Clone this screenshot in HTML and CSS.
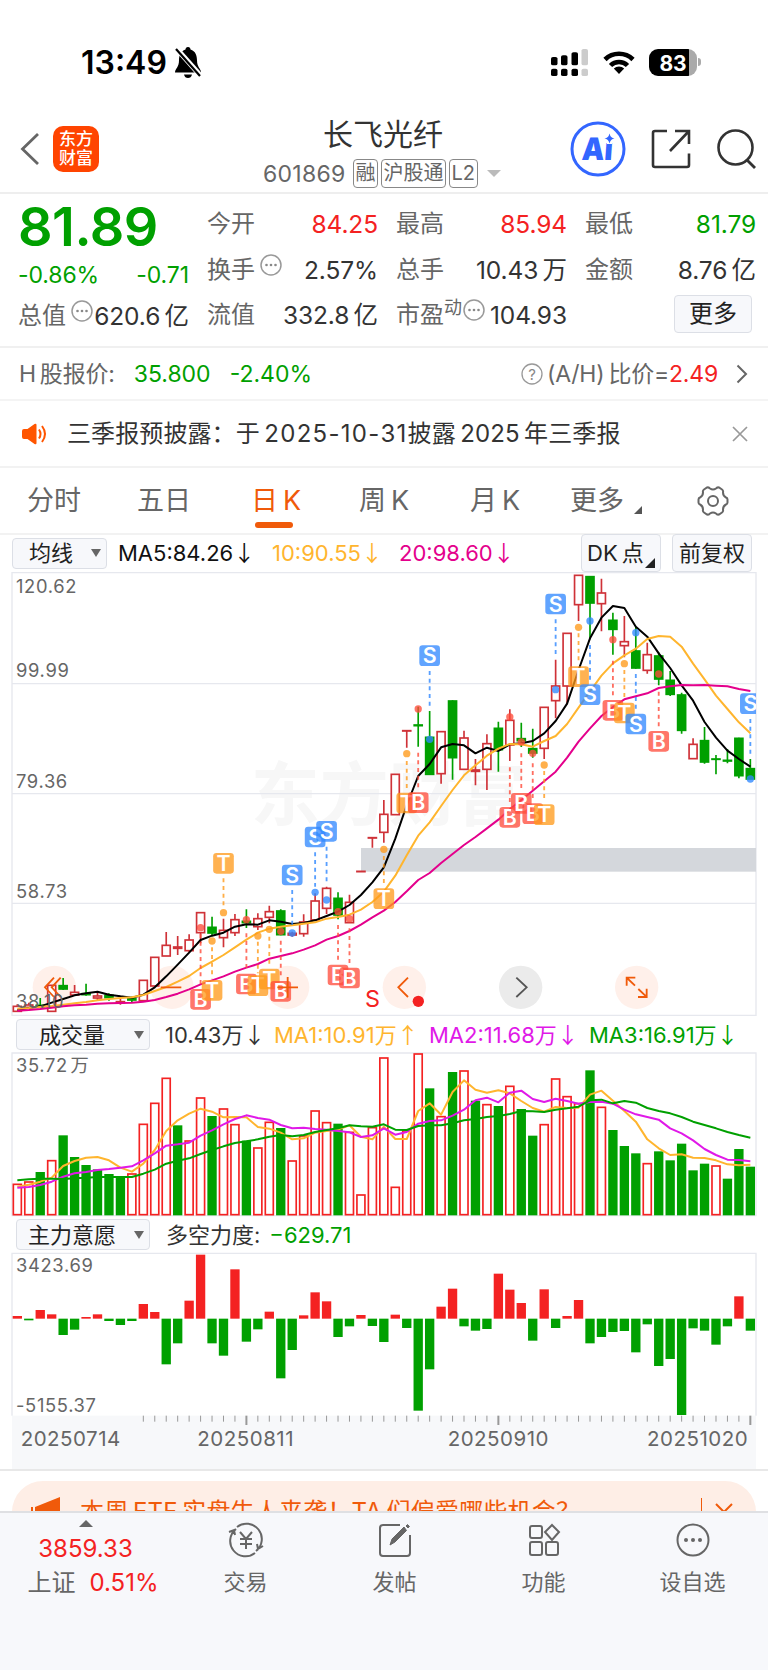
FILE: index.html
```html
<!DOCTYPE html>
<html lang="zh-CN">
<head>
    <meta charset="UTF-8">
    <meta name="viewport" content="width=device-width, initial-scale=1.0">
    <title>长飞光纤</title>
    <link rel="stylesheet" href="styles.css">
</head>
<body>
    <div class="status">
        <span class="time">13:49</span>
        <svg class="bell" width="26" height="40" viewBox="0 0 26 40"><path d="M13 1c2 0 2.500 1.500 2.500 2.500 5 1.500 6.500 6 6.500 11 0 7 4 8 4 12H0c0-4 4-5 4-12 0-5 1.500-9.500 6.500-11C10.500 2.500 11 1 13 1zM9 28.500h8c-.5 2.500-2 3.500-4 3.500s-3.500-1-4-3.500z" transform="translate(0 3)"/><path d="M1 5l24 27" stroke="#fff" stroke-width="5"/><path d="M1 6l24 27" stroke="#000" stroke-width="2.200"/></svg>
        <svg class="signal" width="38" height="27" viewBox="0 5 38 34" preserveAspectRatio="none"><g fill="#000"><rect x="0" y="15" width="6.500" height="10.500" rx="2"/><rect x="10" y="13" width="6.500" height="12.500" rx="2"/><rect x="20.500" y="9" width="6.500" height="16.500" rx="2"/><rect x="0" y="30" width="6.500" height="9" rx="2"/><rect x="10" y="30" width="6.500" height="9" rx="2"/><rect x="20.500" y="30" width="6.500" height="9" rx="2"/></g><g fill="#ccc"><rect x="30.500" y="5" width="6.500" height="20.500" rx="2"/><rect x="30.500" y="30" width="6.500" height="9" rx="2"/></g></svg>
        <svg class="wifi" width="32" height="26" viewBox="0 0 32 26"><path d="M2 9.500a20 20 0 0 1 28 0M7.500 15.500a12 12 0 0 1 17 0" fill="none" stroke="#000" stroke-width="4.600"/><path d="M16 24l-5.200-5.500a7.500 7.500 0 0 1 10.400 0z"/></svg>
        <span class="battery"><b>83</b></span>
    </div>

    <div class="nav">
        <svg class="back" width="20" height="34" viewBox="0 0 20 34"><path d="M18 2L2.500 17 18 32" fill="none" stroke="#666" stroke-width="2.800"/></svg>
        <div class="logo">东方<br>财富</div>
        <div class="title">
            <h1>长飞光纤</h1>
            <div class="code"><span>601869</span><i>融</i><i>沪股通</i><i>L2</i><em></em></div>
        </div>
        <svg class="ai" width="56" height="56" viewBox="0 0 56 56"><circle cx="28" cy="28" r="26" fill="none" stroke="#3366ff" stroke-width="3"/><text x="14" y="39" textLength="31" lengthAdjust="spacingAndGlyphs" transform="skewX(-4)">Ai</text><path d="M39.500 12.500q1 4.500 5 5-4 .5-5 5-1-4.500-5-5 4-.5 5-5z" fill="#3366ff" stroke="#fff" stroke-width="5" paint-order="stroke"/></svg>
        <svg class="share" width="42" height="42" viewBox="0 0 42 42"><path d="M17 3H5a2 2 0 0 0-2 2v32a2 2 0 0 0 2 2h32a2 2 0 0 0 2-2V25.500M25 3h14v13M39 3L20 23" fill="none" stroke="#333" stroke-width="2.600"/></svg>
        <svg class="search" width="42" height="42" viewBox="0 0 42 42"><circle cx="19.500" cy="19.500" r="17" fill="none" stroke="#333" stroke-width="2.600"/><path d="M31 32l8 8" stroke="#333" stroke-width="2.800"/></svg>
    </div>

    <div class="quote">
        <div class="col first">
            <strong>81.89</strong>
            <p class="green change"><span>-0.86%</span><span>-0.71</span></p>
            <p><label>总值</label><svg class="dots" viewBox="0 0 22 22"><use href="#dots"/></svg><span>620.6&thinsp;亿</span></p>
        </div>
        <div class="col">
            <p><label>今开</label><span class="red">84.25</span></p>
            <p><label>换手</label><svg class="dots" viewBox="0 0 22 22"><use href="#dots"/></svg><span>2.57%</span></p>
            <p><label>流值</label><span>332.8&thinsp;亿</span></p>
        </div>
        <div class="col">
            <p><label>最高</label><span class="red">85.94</span></p>
            <p><label>总手</label><span>10.43&thinsp;万</span></p>
            <p><label>市盈<sup>动</sup></label><svg class="dots tight" viewBox="0 0 22 22"><use href="#dots"/></svg><span>104.93</span></p>
        </div>
        <div class="col">
            <p><label>最低</label><span class="green">81.79</span></p>
            <p><label>金额</label><span>8.76&thinsp;亿</span></p>
            <p><button class="more">更多</button></p>
        </div>
    </div>

    <div class="hshare">
        <label>H&thinsp;股报价:</label>
        <span class="green">35.800</span>
        <span class="green">-2.40%</span>
        <svg class="help" width="22" height="22" viewBox="0 0 22 22"><circle cx="11" cy="11" r="10" fill="none" stroke="#999" stroke-width="1.300"/><text x="11" y="16.500">?</text></svg>
        <label>(A/H)&thinsp;比价=</label><span class="red">2.49</span>
        <svg class="next" width="12" height="20" viewBox="0 0 12 20"><path d="M1.500 1.500L10 10l-8.500 8.500" fill="none" stroke="#666" stroke-width="2"/></svg>
    </div>

    <div class="notice">
        <svg width="26" height="22" viewBox="0 0 26 22"><path d="M0 8q0-2 2-2h3.500l7-5q2-1 2 1v18q0 2-2 1l-7-5H2q-2 0-2-2z" fill="#ff5500"/><path d="M17 6.500q3 4.500 0 9M20 3q6 8 0 16" fill="none" stroke="#ff5500" stroke-width="2"/></svg>
        <span>三季报预披露：于&thinsp;<time>2025-10-31</time>披露&thinsp;2025&thinsp;年三季报</span>
        <svg width="16" height="16" viewBox="0 0 16 16"><path d="M1 1l14 14M15 1L1 15" stroke="#999" stroke-width="1.700"/></svg>
    </div>

    <div class="tabs">
        <span>分时</span>
        <span>五日</span>
        <span class="active">日&thinsp;K</span>
        <span>周&thinsp;K</span>
        <span>月&thinsp;K</span>
        <span class="corner">更多</span>
        <svg width="32" height="30" viewBox="0 0 32 30"><g fill="none" stroke="#666" stroke-width="2"><path d="M10 1.500Q12 1 13 2.500q3 2 6 0 1-1.500 3-1l3 2q1.500 1 1 3 0 3.500 3 5 1.500.5 1.500 2v3q0 1.500-1.500 2-3 1.500-3 5 .5 2-1 3l-3 2q-2 .5-3-1-3-2-6 0-1 1.500-3 1l-3-2q-1.500-1-1-3 0-3.500-3-5Q1.500 18 1.500 16.500v-3q0-1.500 1.500-2 3-1.500 3-5-.5-2 1-3z"/><circle cx="16" cy="15" r="5"/></g></svg>
    </div>

    <div class="toolbar ma">
        <button class="select">均线</button>
        <span>MA5:84.26<u>↓</u></span>
        <span class="yellow">10:90.55<u>↓</u></span>
        <span class="pink">20:98.60<u>↓</u></span>
        <button class="small corner">DK&thinsp;点</button>
        <button class="small">前复权</button>
    </div>

    <!-- all three charts use three units per pixel -->
    <svg class="chart" width="768" height="448" viewBox="0 0 2304 1344">
        <clipPath id="plot"><rect x="36" y="8" width="2232" height="1328"/></clipPath>
        <text class="watermark" x="752" y="750">东方财富</text>
        <path class="grid" d="M36 341H2268M36 671H2268M36 1000H2268"/>
        <path class="frame" d="M36 8H2268V1336H36z"/>
        <rect x="1083" y="834" width="1185" height="71" fill="#d4d7dc"/>
        <g fill="#fff0ea">
            <circle cx="163" cy="1252" r="65"/>
            <circle cx="516" cy="1252" r="65"/>
            <circle cx="863" cy="1252" r="65"/>
            <circle cx="1213" cy="1252" r="65"/>
            <circle cx="1562" cy="1252" r="65" fill="#ebebeb"/>
            <circle cx="1910" cy="1252" r="65"/>
        </g>
        <g id="kline" clip-path="url(#plot)"></g>
        <g class="tool">
            <path d="M162 1223l-27 29 27 29M182 1223l-27 29 27 29M482 1252h62M832 1252h62M863 1221v62M1224 1223l-29 29 29 29"/>
            <path d="M1549 1223l31 29-31 29" stroke="#555"/>
            <path d="M1880 1247v-24h26M1881 1224l24 23M1940 1256v25h-26M1939 1280l-24-23"/>
        </g>
        <text class="sell" x="1095" y="1310">S</text>
        <circle cx="1255" cy="1294" r="17" fill="#f42222"/>
        <g class="axis">
            <text x="48" y="69">120.62</text>
            <text x="48" y="321">99.99</text>
            <text x="48" y="653">79.36</text>
            <text x="48" y="983">58.73</text>
            <text x="48" y="1315">38.10</text>
        </g>
    </svg>

    <div class="toolbar vol">
        <button class="select">成交量</button>
        <span>10.43万<u>↓</u></span>
        <span class="yellow">MA1:10.91万<u>↑</u></span>
        <span class="purple">MA2:11.68万<u>↓</u></span>
        <span class="green">MA3:16.91万<u>↓</u></span>
    </div>
    <svg class="chart" width="768" height="165" viewBox="0 126 2304 495">
        <path class="frame" d="M36 129H2268V617H36z"/>
        <g id="volume"></g>
        <g class="axis"><text x="48" y="186">35.72<tspan dx="8">万</tspan></text></g>
    </svg>

    <div class="toolbar force">
        <button class="select">主力意愿</button>
        <span>多空力度:</span>
        <span class="green">−629.71</span>
    </div>
    <svg class="chart" width="768" height="217" viewBox="0 111 2304 651">
        <rect x="36" y="602" width="2232" height="160" fill="#f7f8fa"/>
        <path class="frame" d="M36 602V115H2268V602"/>
        <g id="force"></g>
        <g class="axis">
            <text x="48" y="172">3423.69</text>
            <text x="48" y="591">-5155.37</text>
        </g>
        <g class="axis dates">
            <text x="62" y="693">20250714</text>
            <text x="592" y="693">20250811</text>
            <text x="1343" y="693">20250910</text>
            <text x="1941" y="693">20251020</text>
        </g>
    </svg>

    <div class="promo">
        <div class="pill">
            <svg width="30" height="30" viewBox="0 0 30 30"><path d="M1 10h2v14H1zM5 10l25-10v30L5 24z" fill="#f05a0a"/></svg>
            <span>本周&thinsp;ETF&thinsp;实盘牛人来袭！TA&thinsp;们偏爱哪些机会？</span>
            <i></i>
            <svg width="18" height="18" viewBox="0 0 18 18"><path d="M1 1l16 16M17 1L1 17" stroke="#f05a0a" stroke-width="2"/></svg>
        </div>
    </div>

    <div class="bottom">
        <div class="index">
            <em></em>
            <span class="red">3859.33</span>
            <span class="name">上证<b class="red">0.51%</b></span>
        </div>
        <div class="item">
            <svg width="40" height="36" viewBox="0 0 40 36"><path d="M11 5A15 15 0 0 1 30 29M29 31A15 15 0 0 1 10 7M3 10l5-2 1 5M37 24l-5 3-1-5M14 10l6 7 6-7M20 17v10M14 17h12M14 22h12"/></svg>
            <span>交易</span>
        </div>
        <div class="item">
            <svg width="40" height="36" viewBox="0 0 40 36"><path d="M25 3H8a3 3 0 0 0-3 3v25a3 3 0 0 0 3 3h24a3 3 0 0 0 3-3V13"/><path d="M15 23l2-6L29 5l2.500 3.500L20 20zM31 4l1.500-1.500 2 2L33 6z" fill="#666" stroke-width="1"/></svg>
            <span>发帖</span>
        </div>
        <div class="item">
            <svg width="40" height="36" viewBox="0 0 40 36"><rect x="6" y="4" width="12" height="12" rx="2"/><path d="M28 3l7 7-7 8-7-8z"/><rect x="6" y="20" width="12" height="13" rx="2"/><rect x="22" y="20" width="12" height="13" rx="2"/></svg>
            <span>功能</span>
        </div>
        <div class="item">
            <svg width="40" height="36" viewBox="0 0 40 36"><circle cx="20" cy="18" r="15.500"/><g fill="#666" stroke="none"><circle cx="13" cy="18" r="2"/><circle cx="20" cy="18" r="2"/><circle cx="27" cy="18" r="2"/></g></svg>
            <span>设自选</span>
        </div>
    </div>

    <svg width="0" height="0" class="defs">
        <symbol id="dots" viewBox="0 0 22 22"><circle cx="11" cy="11" r="10" fill="none" stroke="#999" stroke-width="1.500"/><g fill="#888"><circle cx="6.500" cy="11" r="1.300"/><circle cx="11" cy="11" r="1.300"/><circle cx="15.500" cy="11" r="1.300"/></g></symbol>
    </svg>
    <script src="script.js"></script>
</body>
</html>
```

FILE: styles.css
```css
body {
    margin: 0;
    width: 768px;
    height: 1670px;
    overflow: hidden;
    background: #fff;
    color: #333;
    font-family: Inter, "Noto Sans CJK SC", sans-serif;
    font-size: 24px;
    line-height: 32px;
}
svg {
    display: block;
    flex: none;
}
p, h1 {
    margin: 0;
    font-weight: 400;
}
i, em {
    font-style: normal;
}
button {
    font: inherit;
    color: #222;
    background: #f7f8fb;
    border: 1px solid #dcdfe6;
    border-radius: 4px;
    padding: 0;
}
.red { color: #f42222; }
.green { color: #00a000; }
.yellow { color: #ffb52e; }
.pink { color: #e4008c; }
.purple { color: #e019e8; }
.defs {
    position: absolute;
}

/* status bar */
.status {
    display: flex;
    align-items: center;
    height: 100px;
    padding: 25px 71px 0 81px;
    box-sizing: border-box;
    color: #000;
}
.time {
    font-size: 32px;
    font-weight: 600;
    width: 94px;
}
.signal {
    margin-left: auto;
}
.wifi {
    margin: 0 14px 0 14px;
}
.battery {
    width: 48px;
    height: 27px;
    border-radius: 9px;
    background: linear-gradient(90deg, #000 84%, #aaa 84%);
    line-height: 27px;
    text-align: center;
    position: relative;
}
.battery::after {
    content: "";
    position: absolute;
    right: -4px;
    top: 9px;
    width: 3px;
    height: 8px;
    border-radius: 0 4px 4px 0;
    background: #aaa;
}
.battery b {
    color: #fff;
    font-size: 21px;
    font-weight: 700;
}

/* title row */
.nav {
    display: flex;
    align-items: center;
    height: 92px;
    padding: 7px 10px 0 20px;
    box-sizing: border-box;
    border-bottom: 1px solid #fff;
}
.logo {
    width: 46px;
    height: 46px;
    margin-left: 13px;
    border-radius: 10px;
    background: #ff4400;
    color: #fff;
    font-size: 17px;
    line-height: 19px;
    font-weight: 500;
    text-align: center;
    padding-top: 4px;
    box-sizing: border-box;
}
.title {
    margin-left: 164px;
    width: 307px;
}
.title h1 {
    width: 240px;
    text-align: center;
    font-size: 30px;
    line-height: 40px;
    margin-top: 9px;
}
.code {
    display: flex;
    align-items: center;
    height: 40px;
    color: #666;
    font-size: 23px;
    letter-spacing: 0.3px;
}
.code span {
    width: 90px;
}
.code i {
    border: 1px solid #888;
    border-radius: 4px;
    font-size: 20px;
    line-height: 27px;
    letter-spacing: 0;
    padding: 0 1.500px;
    margin-right: 3px;
}
.code em {
    border: 7px solid transparent;
    border-top-color: #bbb;
    margin: 6px 0 0 6px;
}
.ai text {
    font: 900 31px Inter, sans-serif;
    fill: #3366ff;
}
.share {
    margin-left: 24px;
}
.search {
    margin-left: 24px;
    margin-right: -20px;
}

/* quote table */
.quote {
    display: grid;
    grid-template-columns: repeat(4, 171px);
    gap: 18px;
    height: 156px;
    padding: 7px 0 0 18px;
    box-sizing: border-box;
    border-top: 2px solid #eee;
    border-bottom: 2px solid #f0f0f0;
}
.col p {
    display: flex;
    align-items: center;
    height: 45.700px;
    white-space: nowrap;
}
.col span {
    margin-left: auto;
    font-size: 24.500px;
    letter-spacing: -0.1px;
}
.col label, .hshare label {
    color: #666;
}
.first strong {
    display: block;
    height: 55px;
    font-size: 54px;
    line-height: 52px;
    font-weight: 600;
    color: #00a000;
    letter-spacing: -0.5px;
}
.col .change {
    height: 37px;
    padding-top: 1px;
    box-sizing: border-box;
}
.change span:first-child {
    margin: 0;
}
.col.first .change span {
    font-size: 23px;
}
.col sup {
    font-size: 18px;
    line-height: 10px;
    vertical-align: 9px;
}
.dots {
    width: 22px;
    height: 22px;
    margin: -10px -4px 0 5px;
}
.tight {
    margin-left: 1px;
}
.more {
    width: 78px;
    height: 38px;
    margin: -3px 4px 0 auto;
}

.hshare {
    display: flex;
    align-items: center;
    height: 53px;
    padding: 0 20px 0 19px;
    box-sizing: border-box;
    border-bottom: 2px solid #f4f4f4;
    font-size: 23px;
    letter-spacing: -0.2px;
    white-space: nowrap;
}
.hshare span.green {
    margin-left: 19px;
    letter-spacing: 0;
}
.help {
    margin: 0 4px 0 auto;
}
.help text {
    font-size: 15px;
    fill: #888;
    text-anchor: middle;
}
.next {
    margin-left: 18px;
}

.notice {
    display: flex;
    align-items: center;
    height: 67px;
    padding: 0 20px 0 22px;
    box-sizing: border-box;
    border-bottom: 2px solid #f2f2f2;
    white-space: nowrap;
}
.notice span {
    flex: 1;
    margin-left: 19px;
    letter-spacing: 0.1px;
}
.notice time {
    letter-spacing: 1.300px;
}

/* period tabs */
.tabs {
    display: grid;
    grid-template-columns: 110px 114px 108px 111px 100px 127px 32px;
    align-items: center;
    height: 67px;
    padding: 1px 0 0 27px;
    box-sizing: border-box;
    border-bottom: 2px solid #f2f2f2;
    color: #666;
    font-size: 27px;
}
.tabs .active {
    color: #f05a0a;
    position: relative;
}
.tabs .active::after {
    content: "";
    position: absolute;
    left: 4px;
    bottom: -11px;
    width: 38px;
    height: 6px;
    border-radius: 3px;
    background: #f05a0a;
}
.corner::after {
    content: "";
    display: inline-block;
    border: 4px solid #555;
    border-top-color: transparent;
    border-left-color: transparent;
    margin-left: 10px;
    vertical-align: -4px;
}

/* chart headers */
.toolbar {
    display: flex;
    align-items: center;
    font-size: 22px;
    white-space: nowrap;
}
.toolbar u {
    text-decoration: none;
    font-family: "Noto Sans CJK SC";
    line-height: 20px;
}
.select {
    display: flex;
    align-items: center;
    justify-content: space-between;
    width: 95px;
    height: 31px;
    padding: 0 5px 0 16px;
    box-sizing: border-box;
}
.select::after {
    content: "";
    border: 5px solid transparent;
    border-top: 8px solid #666;
    border-bottom: 0;
}
.ma {
    padding: 1px 0 0 12px;
    height: 35px;
    box-sizing: border-box;
}
.ma span {
    width: 154px;
}
.ma .select + span {
    margin-left: 11px;
    color: #111;
}
.ma .yellow {
    width: 127px;
}
.ma .pink {
    width: 182px;
}
.small {
    width: 80px;
    height: 38px;
    margin-right: 11px;
    flex: none;
}
.small.corner {
    text-align: left;
    padding-left: 5px;
    box-sizing: border-box;
}
.small.corner::after {
    border-width: 5px;
    border-right-color: #222;
    border-bottom-color: #222;
    margin: 0 -6px 0 1px;
    vertical-align: -7px;
}
.vol, .force {
    padding-left: 16px;
    height: 34px;
}
.vol {
    padding-bottom: 1px;
    height: 33px;
}
.vol .select, .force .select {
    width: 134px;
    padding: 0 5px 0 22px;
}
.vol .select + span {
    margin-left: 15px;
    width: 109px;
}
.vol .yellow {
    width: 155px;
}
.vol .purple {
    width: 160px;
}
.force {
    height: 35px;
}
.force .select {
    padding-left: 11px;
}
.force .select + span {
    margin: 0 9px 0 16px;
}

/* charts */
.grid, .frame {
    fill: none;
    stroke: #e6e8ee;
    stroke-width: 4;
}
.axis {
    fill: #666;
    font-size: 55px;
    letter-spacing: 2px;
}
.dates {
    font-size: 61.500px;
    letter-spacing: 1.500px;
}
.watermark {
    font-size: 207px;
    font-weight: 700;
    fill: #f7f7f7;
}
.tool {
    fill: none;
    stroke: #f05a0a;
    stroke-width: 5.500;
}
.sell {
    fill: #f42222;
    font-size: 70px;
}
.candle { stroke-width: 5; }
.up { fill: #fff; stroke: #cf3238; }
.down { fill: #00a000; stroke: #00a000; }
.rise { fill: #fff; stroke: #f42222; stroke-width: 5; }
.fall { fill: #00a000; }
.plus { fill: #f42222; }
.line {
    fill: none;
    stroke-width: 6;
    stroke-linejoin: round;
}
.mark text {
    fill: #fff;
    stroke: none;
    font-size: 64px;
    font-weight: 600;
    text-anchor: middle;
}
.mark path {
    stroke-width: 5.500;
    stroke-dasharray: 12 11;
}

/* banner cut off by the bottom bar */
.promo {
    height: 42px;
    padding: 10px 12px 0;
    box-sizing: border-box;
    border-top: 2px solid #e8e8e8;
    overflow: hidden;
}
.pill {
    display: flex;
    align-items: center;
    height: 62px;
    padding: 0 23px 0 18px;
    border-radius: 31px;
    background: #feeee6;
    color: #f05a0a;
    white-space: nowrap;
}
.pill span {
    flex: 1;
    margin-left: 20px;
    letter-spacing: 0.2px;
}
.pill i {
    width: 1px;
    height: 28px;
    margin-right: 13px;
    background: #f05a0a;
}

/* bottom bar */
.bottom {
    display: flex;
    height: 160px;
    border-top: 2px solid #dfe0e3;
    background: #f7f8fb;
    color: #666;
    font-size: 22px;
}
.index {
    width: 171px;
    text-align: center;
    font-size: 24px;
    padding-top: 7px;
}
.index em {
    display: block;
    width: 0;
    margin: 0 auto;
    border: 7px solid transparent;
    border-bottom-color: #666;
    border-top: 0;
}
.index span {
    display: block;
    margin: 6px 0 2px;
}
.index .name {
    padding-left: 15px;
    margin-top: 2px;
}
.index b {
    font-weight: 400;
    margin-left: 14px;
}
.item {
    width: 149px;
    text-align: center;
    padding-top: 9px;
}
.item svg {
    margin: 0 auto 8px;
    fill: none;
    stroke: #666;
    stroke-width: 2;
}
```

FILE: script.js
```js
const NS = "http://www.w3.org/2000/svg";
const xAt = i => 52 + 34.36 * i;

function add(parent, tag, attrs, text) {
    const el = document.createElementNS(NS, tag);
    for (const key in attrs) el.setAttribute(key, attrs[key]);
    if (text) el.textContent = text;
    parent.appendChild(el);
    return el;
}

function line(parent, color, ys) {
    add(parent, "polyline", {
        class: "line",
        stroke: color,
        points: ys.map((y, i) => `${xAt(i)},${y}`).join(" ")
    });
}

// [up, high, body top, body bottom, low]
const candles = [
    [1, 1303, 1309, 1324, 1324], [1, 1298, 1305, 1312, 1316], [0, 1284, 1306, 1310, 1312], [1, 1246, 1246, 1324, 1324],
    [0, 1224, 1247, 1257, 1260], [1, 1245, 1267, 1275, 1278], [0, 1241, 1271, 1274, 1277], [1, 1265, 1278, 1284, 1292],
    [0, 1270, 1276, 1283, 1292], [1, 1285, 1295, 1299, 1304], [0, 1280, 1286, 1290, 1296], [1, 1231, 1231, 1292, 1292],
    [1, 1162, 1162, 1248, 1248], [1, 1086, 1126, 1158, 1158], [1, 1098, 1131, 1135, 1155], [1, 1093, 1110, 1142, 1148],
    [1, 1028, 1028, 1088, 1120], [0, 1040, 1072, 1089, 1098], [1, 1046, 1081, 1103, 1132], [1, 1032, 1049, 1088, 1098],
    [0, 1018, 1054, 1058, 1074], [1, 1030, 1046, 1070, 1080], [1, 1007, 1025, 1042, 1060], [0, 1018, 1023, 1094, 1096],
    [1, 1085, 1090, 1095, 1100], [1, 1033, 1056, 1091, 1100], [1, 970, 993, 1050, 1050], [1, 950, 955, 1015, 1032],
    [0, 967, 985, 1035, 1048], [1, 974, 997, 1058, 1058], [1, 904, 904, 905, 905], [1, 803, 803, 804, 833],
    [1, 690, 733, 787, 818], [1, 613, 613, 734, 734], [1, 482, 482, 483, 533], [0, 410, 465, 467, 530],
    [0, 423, 502, 613, 615], [1, 485, 485, 611, 641], [0, 391, 393, 563, 629], [1, 482, 504, 598, 598],
    [1, 567, 600, 604, 646], [1, 493, 521, 598, 660], [0, 455, 475, 539, 605], [1, 418, 451, 525, 573],
    [0, 458, 506, 512, 531], [0, 476, 536, 549, 563], [1, 412, 412, 535, 567], [1, 269, 348, 392, 445],
    [1, 190, 190, 348, 403], [1, 16, 16, 104, 153], [0, 18, 20, 99, 208], [1, 26, 69, 101, 184],
    [0, 128, 151, 178, 254], [1, 138, 215, 227, 262], [0, 170, 243, 294, 296], [1, 218, 254, 301, 311],
    [0, 247, 258, 327, 346], [0, 303, 331, 373, 378], [0, 368, 375, 481, 491], [1, 505, 523, 566, 566],
    [0, 471, 512, 576, 581], [0, 555, 567, 568, 613], [0, 537, 571, 573, 580], [0, 503, 505, 617, 625],
    [0, 567, 596, 627, 628]
];

const kline = document.getElementById("kline");
candles.forEach(([up, high, top, bottom, low], i) => {
    const x = xAt(i);
    const g = add(kline, "g", { class: "candle " + (up ? "up" : "down") });
    add(g, "path", { d: `M${x} ${high}V${low}` });
    add(g, "rect", { x: x - 12, y: top, width: 24, height: bottom - top });
});

line(kline, "#000", [
    1320, 1314, 1309, 1298, 1287, 1276, 1270, 1265, 1274, 1279, 1283, 1274, 1252, 1219, 1184, 1148, 1110, 1097, 1088, 1070,
    1063, 1064, 1051, 1055, 1062, 1059, 1051, 1038, 1025, 1005, 975, 937, 892, 806, 705, 618, 582, 532, 522, 526,
    550, 533, 543, 523, 520, 513, 490, 453, 401, 300, 205, 143, 108, 114, 170, 200, 250, 294, 346, 392, 456, 503, 542, 567, 590
]);
line(kline, "#ffb52e", [
    1316, 1314, 1311, 1308, 1304, 1300, 1296, 1291, 1287, 1284, 1282, 1275, 1263, 1251, 1235, 1218, 1194, 1175, 1155, 1132,
    1109, 1088, 1076, 1070, 1066, 1061, 1057, 1046, 1041, 1034, 1019, 996, 965, 917, 856, 797, 757, 708, 660, 616,
    586, 557, 536, 522, 523, 530, 513, 498, 462, 413, 364, 317, 280, 256, 236, 207, 198, 200, 230, 281, 328, 377, 417, 457, 490
]);
line(kline, "#e4008c", [
    1322, 1320, 1317, 1313, 1309, 1306, 1304, 1301, 1300, 1299, 1298, 1295, 1290, 1281, 1271, 1258, 1243, 1231, 1219, 1205,
    1193, 1182, 1166, 1158, 1150, 1139, 1126, 1109, 1098, 1083, 1064, 1042, 1022, 996, 964, 930, 909, 879, 852, 825,
    801, 775, 749, 718, 690, 662, 634, 605, 563, 515, 475, 438, 411, 388, 379, 370, 354, 349, 345, 346, 345, 347, 349, 357, 363
]);

// [type, candle index, badge y, dot y, dash start, dash end]
const marks = [
    ["B", 16, 1288, 1073, 1092, 1250], ["T", 17, 1261, 1113, 1132, 1225], ["T", 18, 880, 1028, 925, 1012],
    ["B", 20, 1242, 1049, 1090, 1200], ["T", 21, 1247, 1098, 1115, 1210], ["T", 22, 1227, 1078, 1100, 1190],
    ["B", 23, 1264, 1084, 1112, 1220], ["S", 24, 915, 1089, 960, 1070], ["S", 26, 801, 967, 847, 950],
    ["S", 27, 784, 990, 830, 935], ["B", 28, 1215, 1025, 1065, 1175], ["B", 29, 1224, 1046, 1075, 1185],
    ["T", 32, 986, 838, 858, 948], ["T", 34, 699, 551, 573, 660], ["B", 35, 698, 417, 548, 658],
    ["S", 36, 257, 508, 303, 408], ["B", 43, 742, 441, 592, 705], ["B", 44, 700, 516, 550, 660],
    ["B", 45, 731, 550, 580, 690], ["T", 46, 734, 585, 603, 692], ["S", 47, 102, 359, 148, 255],
    ["T", 49, 320, 172, 190, 280], ["S", 50, 374, 153, 225, 335], ["B", 52, 421, 209, 272, 378],
    ["T", 53, 429, 281, 300, 388], ["S", 54, 462, 188, 312, 417], ["B", 56, 514, 312, 365, 470],
    ["S", 64, 401, 627, 447, 552]
];
const markColor = { S: "#2f88ff", T: "#ff9a1a", B: "#ff4b3a" };
marks.forEach(([type, i, y, dot, from, to]) => {
    const x = xAt(i);
    const color = markColor[type];
    const g = add(kline, "g", { class: "mark" });
    add(g, "path", { d: `M${x} ${from}V${to}`, stroke: color, opacity: 0.8 });
    add(g, "circle", { cx: x, cy: dot, r: 11, fill: color, opacity: 0.78 });
    add(g, "rect", { x: x - 31, y: y - 31, width: 62, height: 62, rx: 10, fill: color, opacity: 0.76 });
    add(g, "text", { x: x, y: y + 23 }, type);
});

// [up, bar top]
const volumes = [
    [1, 523], [1, 516], [0, 486], [1, 452], [0, 376], [0, 441], [0, 465], [0, 478], [0, 492], [0, 500], [1, 492], [1, 343], [1, 280],
    [1, 205], [0, 346], [1, 393], [1, 264], [0, 318], [1, 297], [1, 344], [0, 392], [1, 414], [1, 337], [0, 354], [1, 453], [1, 378],
    [1, 303], [1, 338], [0, 341], [1, 367], [1, 555], [1, 353], [1, 144], [1, 532], [1, 363], [1, 132], [0, 235], [1, 320], [0, 186],
    [1, 183], [0, 272], [1, 284], [0, 288], [1, 229], [0, 297], [0, 377], [1, 344], [1, 207], [1, 260], [1, 281], [0, 181], [1, 292],
    [0, 360], [0, 408], [0, 430], [1, 461], [0, 424], [0, 451], [0, 401], [0, 481], [0, 461], [1, 468], [0, 506], [0, 417], [0, 470]
];
const volume = document.getElementById("volume");
volumes.forEach(([up, y], i) => {
    if (up) add(volume, "rect", { class: "rise", x: xAt(i) - 12, y: y, width: 24, height: 614 - y });
    else add(volume, "rect", { class: "fall", x: xAt(i) - 14, y: y, width: 28, height: 616 - y });
});
line(volume, "#ffb52e", [
    530, 524, 515, 503, 468, 453, 443, 441, 451, 473, 485, 461, 420, 363, 331, 311, 296, 305, 322, 321, 322, 351, 356, 368, 388,
    385, 368, 363, 359, 346, 380, 388, 350, 387, 387, 303, 280, 314, 246, 211, 239, 248, 241, 250, 273, 294, 305, 291, 294, 293,
    254, 242, 272, 303, 335, 388, 415, 435, 433, 443, 444, 451, 463, 466, 464
]);
line(volume, "#e019e8", [
    533, 531, 525, 515, 500, 490, 486, 480, 477, 473, 469, 451, 430, 407, 403, 398, 377, 361, 343, 327, 316, 324, 329, 345, 355,
    353, 357, 359, 363, 367, 381, 376, 355, 374, 366, 341, 333, 331, 317, 299, 271, 263, 277, 248, 242, 267, 276, 266, 273, 281,
    276, 275, 281, 299, 313, 321, 329, 355, 370, 391, 417, 435, 449, 450, 454
]);
line(volume, "#00a000", [
    511, 508, 506, 506, 507, 505, 503, 501, 501, 501, 501, 491, 479, 461, 452, 445, 432, 420, 409, 399, 394, 388, 380, 375, 379,
    375, 366, 360, 355, 346, 349, 350, 343, 359, 360, 348, 346, 346, 340, 331, 327, 321, 318, 312, 303, 304, 306, 299, 295, 290,
    271, 269, 280, 273, 278, 294, 303, 310, 321, 335, 345, 355, 366, 375, 383
]);

// far end of each bar, the zero line is at 311
const zero = 311;
const forces = [
    303, 316, 285, 298, 360, 344, 306, 298, 318, 330, 318, 267, 291, 448, 385, 257, 119, 385, 422, 163, 380, 343, 290, 490, 405,
    301, 232, 259, 366, 334, 300, 333, 381, 299, 339, 587, 463, 275, 221, 334, 347, 342, 176, 224, 264, 377, 223, 339, 303, 255,
    385, 366, 351, 348, 412, 328, 453, 432, 600, 340, 347, 389, 334, 244, 347
];
const force = document.getElementById("force");
forces.forEach((y, i) => {
    add(force, "rect", {
        class: y < zero ? "plus" : "fall",
        x: xAt(i) - 14,
        y: Math.min(y, zero),
        width: 28,
        height: Math.abs(y - zero)
    });
    if (i > 10) {
        const major = i === 20 || i === 42 || i === 64;
        add(force, "path", { d: `M${xAt(i)} 602V${major ? 630 : 620}`, stroke: "#999", "stroke-width": major ? 6 : 3 });
    }
});
```
